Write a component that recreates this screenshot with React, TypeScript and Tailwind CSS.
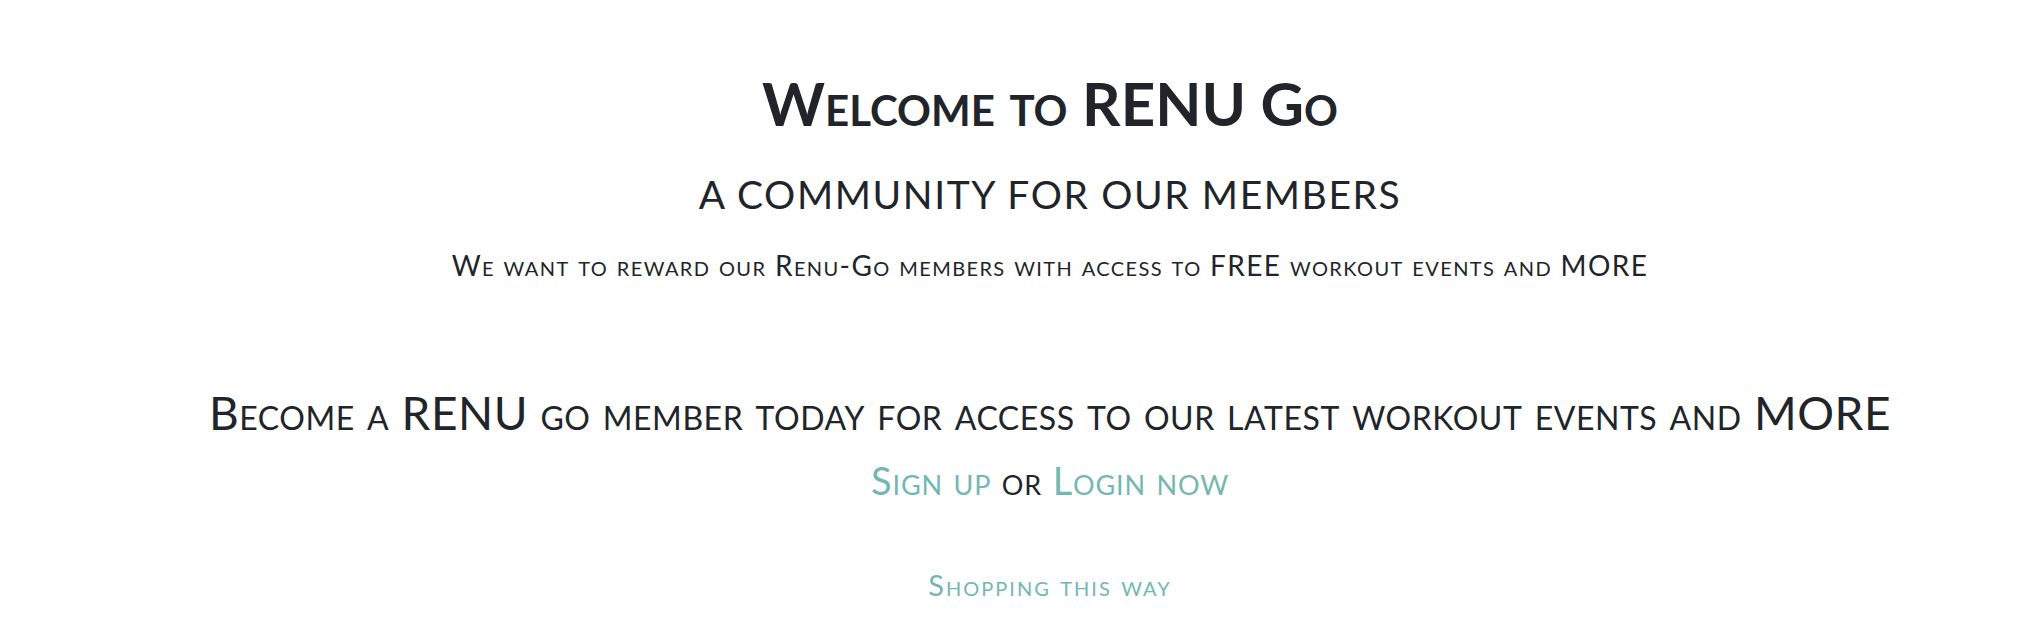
import React from 'react';

export default function App() {
  return (
    <div className="flex min-h-screen flex-col items-center bg-white pl-[70px] text-center font-['Lato',sans-serif] text-[#212529] [font-variant-caps:small-caps]">
      <h1 className="mt-[67px] text-[60px] font-bold leading-[72px]">Welcome to RENU Go</h1>
      <h2 className="mt-[32px] text-[39px] leading-[46px] tracking-[1.6px]">A COMMUNITY FOR OUR MEMBERS</h2>
      <p className="mt-[31px] text-[28px] leading-[34px] tracking-[1.4px]">
        We want to reward our Renu-Go members with access to FREE workout events and MORE
      </p>
      <h3 className="mt-[104px] text-[46px] leading-[54px] tracking-[0.55px]">
        Become a RENU go member today for access to our latest workout events and MORE
      </h3>
      <p className="mt-[17px] text-[38px] leading-[46px] tracking-[0.85px]">
        <a href="#" className="text-[#72b8b1]">Sign up</a> or{' '}
        <a href="#" className="text-[#72b8b1]">Login now</a>
      </p>
      <a href="#" className="mt-[64px] text-[29px] leading-[36px] tracking-[2px] text-[#72b8b1]">
        Shopping this way
      </a>
    </div>
  );
}
